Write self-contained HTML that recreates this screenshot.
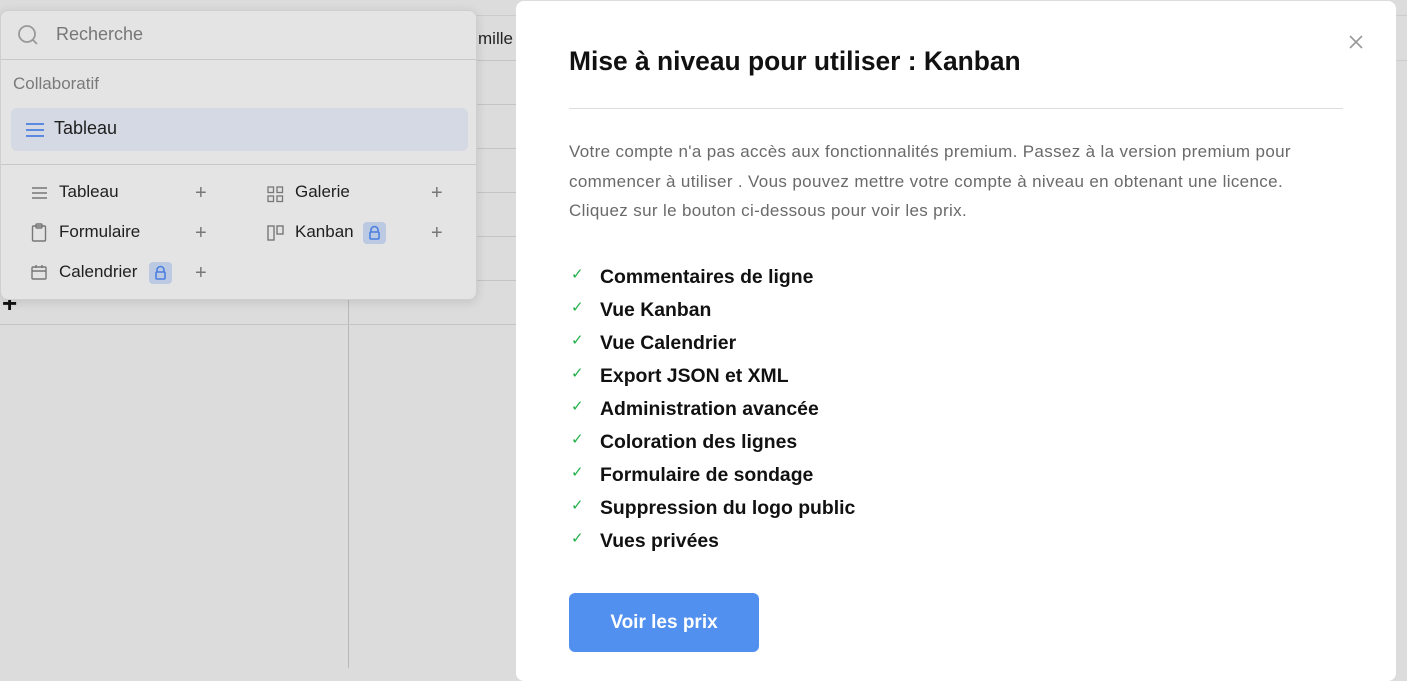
<!DOCTYPE html>
<html><head><meta charset="utf-8"><style>
*{box-sizing:border-box;margin:0;padding:0}
body{width:1407px;height:668px;overflow:hidden;background:#dcdcdc;font-family:"Liberation Sans",sans-serif;position:relative}
.hl{position:absolute;left:0;height:1px;background:#c4c4c4}
.vl{position:absolute;top:15px;width:1px;bottom:0;background:#b8b8b8}
.dd{position:absolute;left:0;top:10px;width:477px;height:290px;background:#e4e4e4;border:1px solid #cfcfcf;border-radius:8px;box-shadow:0 2px 10px rgba(0,0,0,.12)}
.dd .t{position:absolute;font-size:17px;color:#1f1f1f}
.plus{position:absolute;font-size:20px;color:#777;line-height:1}
.lock{position:absolute;width:23px;height:22px;background:#bcc9e3;border-radius:4px}
.modal{position:absolute;left:516px;top:1px;width:880px;height:680px;background:#fff;border-radius:8px}
.feat{position:absolute;left:84px;font-size:19.4px;font-weight:bold;color:#111}
.chk{position:absolute;left:55px;color:#22b04a;font-size:15px}
</style></head><body>
<div class="vl" style="left:348px"></div>
<div class="hl" style="top:15px;left:348px;width:170px;background:#ccc"></div>
<div class="hl" style="top:60px;width:516px"></div>
<div class="hl" style="top:104px;width:516px"></div>
<div class="hl" style="top:148px;width:516px"></div>
<div class="hl" style="top:192px;width:516px"></div>
<div class="hl" style="top:236px;width:516px"></div>
<div class="hl" style="top:280px;width:516px"></div>
<div class="hl" style="top:324px;width:516px"></div>
<div style="position:absolute;left:478px;top:29px;font-size:17px;color:#222">mille</div>
<div style="position:absolute;left:2px;top:288px;font-size:26px;font-weight:bold;color:#111">+</div>
<div class="hl" style="top:15px;left:1396px;width:11px;background:#ccc"></div>
<div class="hl" style="top:60px;left:1396px;width:11px;background:#ccc"></div>

<div class="dd">
 <svg style="position:absolute;left:16px;top:13px" width="22" height="22" viewBox="0 0 22 22" fill="none" stroke="#999" stroke-width="1.8"><circle cx="10" cy="10" r="8"/><path d="M16 16l4 4"/></svg>
 <div class="t" style="left:55px;top:13px;color:#777;font-size:18px">Recherche</div>
 <div style="position:absolute;left:0;right:0;top:48px;height:1px;background:#c8c8c8"></div>
 <div class="t" style="left:12px;top:63px;color:#7a7a7a;font-size:17px">Collaboratif</div>
 <div style="position:absolute;left:10px;top:97px;width:457px;height:43px;background:#d5d9e3;border-radius:6px"></div>
 <svg style="position:absolute;left:24px;top:111px" width="20" height="16" stroke="#4a7fe0" stroke-width="1.8"><path d="M1 2h18M1 8h18M1 14h18"/></svg>
 <div class="t" style="left:53px;top:107px;font-size:18px">Tableau</div>
 <div style="position:absolute;left:0;right:0;top:153px;height:1px;background:#c8c8c8"></div>
 <svg style="position:absolute;left:30px;top:175px" width="17" height="14" stroke="#777" stroke-width="1.5"><path d="M1 2h15M1 7h15M1 12h15"/></svg>
 <div class="t" style="left:58px;top:171px">Tableau</div>
 <div class="plus" style="left:194px;top:172px">+</div>
 <svg style="position:absolute;left:266px;top:175px" width="17" height="17" fill="none" stroke="#777" stroke-width="1.3"><rect x="1" y="1" width="5.5" height="5.5"/><rect x="10" y="1" width="5.5" height="5.5"/><rect x="1" y="10" width="5.5" height="5.5"/><rect x="10" y="10" width="5.5" height="5.5"/></svg>
 <div class="t" style="left:294px;top:171px">Galerie</div>
 <div class="plus" style="left:430px;top:172px">+</div>
 <svg style="position:absolute;left:30px;top:212px" width="16" height="20" fill="none" stroke="#777" stroke-width="1.4"><rect x="1.5" y="3" width="13" height="15" rx="1"/><rect x="5" y="1" width="6" height="4" rx="1"/></svg>
 <div class="t" style="left:58px;top:211px">Formulaire</div>
 <div class="plus" style="left:194px;top:212px">+</div>
 <svg style="position:absolute;left:266px;top:213px" width="18" height="18" fill="none" stroke="#777" stroke-width="1.4"><rect x="1" y="2" width="6" height="14"/><rect x="10" y="2" width="6" height="8"/></svg>
 <div class="t" style="left:294px;top:211px">Kanban</div>
 <div class="lock" style="left:362px;top:211px"><svg width="23" height="22" fill="none" stroke="#4a7fe0" stroke-width="1.6"><path d="M8 10V8a3.5 3.5 0 017 0v2"/><rect x="7" y="10" width="9" height="7" rx="1"/></svg></div>
 <div class="plus" style="left:430px;top:212px">+</div>
 <svg style="position:absolute;left:30px;top:253px" width="16" height="16" fill="none" stroke="#777" stroke-width="1.4"><rect x="1" y="3" width="14" height="12" rx="1"/><path d="M1 7h14M5 1v3M11 1v3"/></svg>
 <div class="t" style="left:58px;top:251px">Calendrier</div>
 <div class="lock" style="left:148px;top:251px"><svg width="23" height="22" fill="none" stroke="#4a7fe0" stroke-width="1.6"><path d="M8 10V8a3.5 3.5 0 017 0v2"/><rect x="7" y="10" width="9" height="7" rx="1"/></svg></div>
 <div class="plus" style="left:194px;top:252px">+</div>
</div>

<div class="modal">
 <svg style="position:absolute;left:832px;top:33px" width="16" height="16" stroke="#999" stroke-width="1.6"><path d="M2 2l12 12M14 2L2 14"/></svg>
 <div style="position:absolute;left:53px;top:45px;font-size:26.4px;font-weight:bold;color:#111">Mise à niveau pour utiliser : Kanban</div>
 <div style="position:absolute;left:53px;top:107px;width:774px;height:1px;background:#ddd"></div>
 <div style="position:absolute;left:53px;top:136px;width:820px;font-size:17px;letter-spacing:0.35px;line-height:29.5px;color:#6a6a6a;white-space:nowrap">Votre compte n'a pas accès aux fonctionnalités premium. Passez à la version premium pour<br>commencer à utiliser . Vous pouvez mettre votre compte à niveau en obtenant une licence.<br>Cliquez sur le bouton ci-dessous pour voir les prix.</div>
 <div class="chk" style="top:264px">✓</div><div class="feat" style="top:265px">Commentaires de ligne</div>
 <div class="chk" style="top:297px">✓</div><div class="feat" style="top:298px">Vue Kanban</div>
 <div class="chk" style="top:330px">✓</div><div class="feat" style="top:331px">Vue Calendrier</div>
 <div class="chk" style="top:363px">✓</div><div class="feat" style="top:364px">Export JSON et XML</div>
 <div class="chk" style="top:396px">✓</div><div class="feat" style="top:397px">Administration avancée</div>
 <div class="chk" style="top:429px">✓</div><div class="feat" style="top:430px">Coloration des lignes</div>
 <div class="chk" style="top:462px">✓</div><div class="feat" style="top:463px">Formulaire de sondage</div>
 <div class="chk" style="top:495px">✓</div><div class="feat" style="top:496px">Suppression du logo public</div>
 <div class="chk" style="top:528px">✓</div><div class="feat" style="top:529px">Vues privées</div>
 <div style="position:absolute;left:53px;top:592px;width:190px;height:59px;background:#5190ee;border-radius:6px;color:#fff;font-size:19px;font-weight:bold;text-align:center;line-height:59px">Voir les prix</div>
</div>
</body></html>
